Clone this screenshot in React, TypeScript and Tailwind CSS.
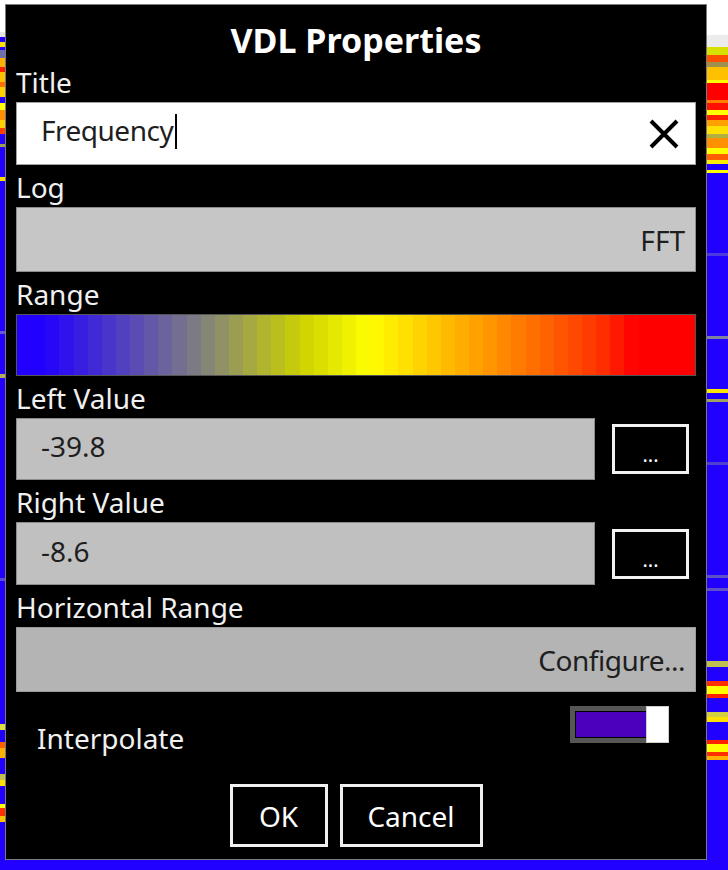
import React from "react";

type Stripe = [number, string];

// spectrum rows peeking out left and right of the dialog
const leftBand: Stripe[] = [
  [32, "#ffffff"], [5, "#e6e6e6"], [5, "#2200ff"], [5, "#ffe000"], [3, "#2200ff"],
  [8, "#7070b0"], [9, "#ffb000"], [5, "#ff2000"], [10, "#ffc000"], [5, "#ff7000"],
  [10, "#ffd000"], [6, "#2200ff"], [7, "#ffff00"], [10, "#ff9000"], [8, "#ffd000"],
  [6, "#ff4000"], [10, "#2200ff"], [3, "#a0a050"], [30, "#2200ff"], [4, "#ffe000"],
  [150, "#2200ff"], [3, "#6a5ad0"], [40, "#2200ff"], [4, "#b0b060"], [200, "#2200ff"],
  [3, "#5a4ad8"], [143, "#2200ff"], [6, "#e0e040"], [12, "#2200ff"], [6, "#ff6000"],
  [10, "#ffb000"], [16, "#2200ff"], [6, "#c0c050"], [6, "#ffe000"], [18, "#2200ff"],
  [4, "#ffff00"], [8, "#ff3000"], [6, "#ffc000"],
];

const rightBand: Stripe[] = [
  [35, "#ffffff"], [12, "#ececec"], [8, "#d8e000"], [7, "#ff5000"], [5, "#a09050"],
  [13, "#ffc000"], [3, "#ffff00"], [17, "#ff0000"], [3, "#ff8000"], [7, "#ff1000"],
  [5, "#ffff00"], [5, "#ff2000"], [6, "#ffa000"], [8, "#ffe000"], [4, "#b0b040"],
  [10, "#ff9000"], [6, "#ffff00"], [6, "#ff6000"], [4, "#ffee00"], [6, "#2200ff"],
  [3, "#ffff00"], [80, "#2200ff"], [3, "#4a3ae0"], [80, "#2200ff"], [3, "#8080a0"],
  [50, "#2200ff"], [4, "#ffe800"], [6, "#2200ff"], [3, "#a0a060"], [60, "#2200ff"],
  [3, "#5040d0"], [110, "#2200ff"], [3, "#6050c8"], [10, "#2200ff"], [3, "#6050c8"],
  [70, "#2200ff"], [6, "#c0c050"], [14, "#2200ff"], [5, "#ff3000"], [8, "#ffff00"],
  [4, "#ff2000"], [14, "#2200ff"], [5, "#d0d040"], [5, "#ffe000"], [18, "#2200ff"],
  [4, "#ff2000"], [8, "#ffff00"], [4, "#ff3000"], [4, "#ffb000"],
];

function Waterfall({ stripes }: { stripes: Stripe[] }) {
  return (
    <div className="flex h-full flex-col overflow-hidden">
      {stripes.map(([h, c], i) => (
        <div key={i} className="shrink-0" style={{ height: h, backgroundColor: c }} />
      ))}
    </div>
  );
}

const stops: [number, number[]][] = [
  [0, [34, 0, 255]],
  [0.04, [34, 0, 255]],
  [0.27, [128, 128, 128]],
  [0.42, [205, 210, 0]],
  [0.52, [255, 255, 0]],
  [0.68, [255, 160, 0]],
  [0.86, [255, 50, 0]],
  [0.91, [255, 0, 0]],
  [1, [255, 0, 0]],
];

function rangeColor(t: number) {
  for (let i = 1; i < stops.length; i++) {
    const [t1, c1] = stops[i];
    const [t0, c0] = stops[i - 1];
    if (t <= t1) {
      const f = (t - t0) / (t1 - t0 || 1);
      const c = c0.map((v, k) => Math.round(v + (c1[k] - v) * f));
      return `rgb(${c[0]},${c[1]},${c[2]})`;
    }
  }
  return "rgb(255,0,0)";
}

const STEPS = 48;

function Label({ children }: { children: React.ReactNode }) {
  return <div className="pt-1 pb-0.5 text-[28px] leading-[36px] text-[#f0f0f0]">{children}</div>;
}

function DotsButton() {
  return (
    <div className="flex h-[50px] w-[77px] shrink-0 items-end justify-center border-[3px] border-[#f2f2f2] pb-[6px] text-[20px] leading-[20px] text-white">
      ...
    </div>
  );
}

export default function App() {
  return (
    <div
      className="flex h-[870px] w-[728px] overflow-hidden bg-[#2200ff]"
      style={{ fontFamily: '"Noto Sans", "Open Sans", sans-serif' }}
    >
      <div className="w-[5px] shrink-0">
        <Waterfall stripes={leftBand} />
      </div>

      <div className="flex w-[702px] shrink-0 flex-col">
        <div className="h-[4px] bg-white" />
        <div className="flex h-[856px] flex-col border border-[#7a7a7a] bg-black px-[10px] pt-[15px]">
          <h1 className="text-center text-[34px] font-bold leading-[40px] text-white">VDL Properties</h1>

          <Label>Title</Label>
          <div className="flex h-[63px] items-center border border-[#a0a0a0] bg-white pb-[7px] pl-[24px] pr-[16px]">
            <span className="text-[28px] leading-[36px] tracking-[-0.5px] text-[#1e1e1e]">Frequency</span>
            <span className="ml-[2px] mt-[2px] h-[35px] w-[2px] bg-black" />
            <svg className="ml-auto mt-[7px]" width="30" height="30" viewBox="0 0 30 30">
              <path d="M2 2 L28 28 M28 2 L2 28" stroke="#000" strokeWidth="4" fill="none" />
            </svg>
          </div>

          <Label>Log</Label>
          <div className="flex h-[65px] items-center justify-end border border-[#8c8c8c] bg-[#c6c6c6] pr-[10px]">
            <span className="text-[28px] leading-[36px] text-[#1e1e1e]">FFT</span>
          </div>

          <Label>Range</Label>
          <div className="flex h-[62px] border border-[#555]">
            {Array.from({ length: STEPS }, (_, i) => (
              <div key={i} className="flex-1" style={{ backgroundColor: rangeColor((i + 0.5) / STEPS) }} />
            ))}
          </div>

          <Label>Left Value</Label>
          <div className="flex h-[62px] items-center gap-[17px]">
            <div className="flex h-[62px] w-[579px] items-center border border-[#8c8c8c] bg-[#c0c0c0] pb-[6px] pl-[24px]">
              <span className="text-[28px] leading-[36px] text-[#1e1e1e]">-39.8</span>
            </div>
            <DotsButton />
          </div>

          <Label>Right Value</Label>
          <div className="flex h-[63px] items-center gap-[17px]">
            <div className="flex h-[63px] w-[579px] items-center border border-[#8c8c8c] bg-[#c0c0c0] pb-[6px] pl-[24px]">
              <span className="text-[28px] leading-[36px] text-[#1e1e1e]">-8.6</span>
            </div>
            <DotsButton />
          </div>

          <Label>Horizontal Range</Label>
          <div className="flex h-[65px] items-center justify-end border border-[#9a9a9a] bg-[#b4b4b4] pr-[10px]">
            <span className="text-[28px] leading-[36px] tracking-[-0.5px] text-[#1e1e1e]">Configure...</span>
          </div>

          <div className="flex h-[92px] items-start justify-between pl-[21px] pr-[27px]">
            <span className="mt-[28px] text-[28px] leading-[36px] text-[#f0f0f0]">Interpolate</span>
            <div className="mt-[14px] flex h-[37px]">
              <div className="w-[76px] border-y-[5px] border-l-[5px] border-[#565656] bg-black py-[1px] pl-[1px]">
                <div className="h-full bg-[#4b00be]" />
              </div>
              <div className="w-[23px] border border-[#d0d0d0] bg-white" />
            </div>
          </div>

          <div className="flex justify-center gap-[12px]">
            <div className="flex h-[63px] w-[98px] items-center justify-center border-[3px] border-[#f0f0f0] text-[28px] leading-[36px] text-white">
              OK
            </div>
            <div className="flex h-[63px] w-[143px] items-center justify-center border-[3px] border-[#f0f0f0] text-[28px] leading-[36px] text-white">
              Cancel
            </div>
          </div>
        </div>
      </div>

      <div className="min-w-0 flex-1">
        <Waterfall stripes={rightBand} />
      </div>
    </div>
  );
}
